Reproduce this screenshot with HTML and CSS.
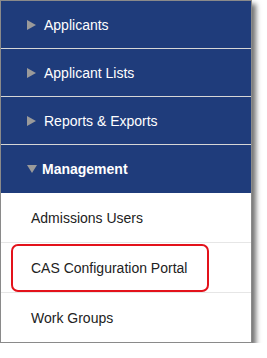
FILE: index.html
```html
<!DOCTYPE html>
<html>
<head>
<meta charset="utf-8">
<link rel="stylesheet" href="styles.css">
</head>
<body>
<div class="menu">
  <div class="item blue"><span class="tri right"></span><span class="label">Applicants</span></div>
  <div class="item blue"><span class="tri right"></span><span class="label">Applicant Lists</span></div>
  <div class="item blue"><span class="tri right"></span><span class="label">Reports &amp; Exports</span></div>
  <div class="item blue open"><span class="tri down"></span><span class="label bold">Management</span></div>
  <div class="item sub">Admissions Users</div>
  <div class="item sub highlighted">CAS Configuration Portal<span class="ring"></span></div>
  <div class="item sub last">Work Groups</div>
</div>
</body>
</html>
```
FILE: styles.css
```css
html, body {
  margin: 0;
  padding: 0;
  background: #ffffff;
}
body {
  font-family: "Liberation Sans", Arial, sans-serif;
  font-size: 14px;
}
.menu {
  width: 250px;
  border: 1px solid #8a8a8a;
  box-shadow: 4px 4px 5px rgba(0, 0, 0, 0.55);
  background: #ffffff;
}
.item {
  display: flex;
  align-items: center;
  box-sizing: border-box;
}
.blue {
  background: #1f3c7b;
  color: #ffffff;
  height: 48px;
  border-bottom: 1px solid #d6d6d6;
  padding-left: 26px;
}
.blue.open {
  border-bottom: none;
  height: 48px;
}
.tri {
  display: block;
  width: 0;
  height: 0;
}
.tri.right {
  border-top: 5px solid transparent;
  border-bottom: 5px solid transparent;
  border-left: 9px solid #9a9a9a;
  margin-right: 8px;
}
.tri.down {
  border-left: 5px solid transparent;
  border-right: 5px solid transparent;
  border-top: 8px solid #9a9a9a;
  margin-right: 5px;
}
.label.bold {
  font-weight: bold;
}
.sub {
  height: 50px;
  color: #222222;
  padding-left: 30px;
  border-bottom: 1px solid #e6e6e6;
  position: relative;
}
.sub.last {
  height: 49px;
  border-bottom: none;
}
.ring {
  position: absolute;
  left: 10px;
  top: 1px;
  width: 198px;
  height: 48px;
  box-sizing: border-box;
  border: 2px solid #e3121b;
  border-radius: 7px;
}
```
